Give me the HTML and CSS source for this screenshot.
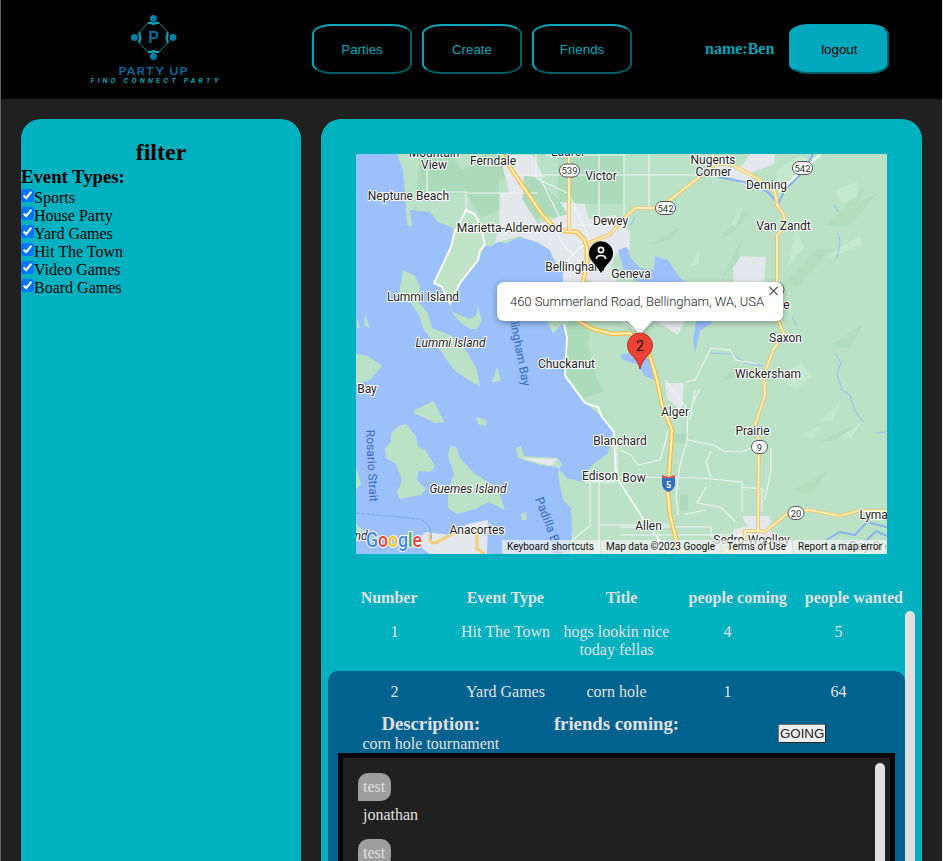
FILE: index.html
```html
<!DOCTYPE html>
<html lang="en">
<head>
<meta charset="utf-8">
<title>Party Up</title>
<link rel="stylesheet" href="styles.css">
</head>
<body>
<header class="topbar">
  <svg class="logo" width="150" height="80" viewBox="80 8 150 80">
    <defs><linearGradient id="ring" x1="0" y1="0" x2="1" y2="1"><stop offset="0" stop-color="#0093b5"/><stop offset="1" stop-color="#00689a"/></linearGradient></defs>
    <g fill="url(#ring)"><circle cx="153.500" cy="18.500" r="3.500"/><circle cx="134.500" cy="37.500" r="3.500"/><circle cx="173" cy="37.500" r="3.500"/><circle cx="153.500" cy="56.500" r="3.500"/></g>
    <g fill="none" stroke="#00a5b8" stroke-width="2.200">
      <path d="M148 23Q151 22.500 153.500 24Q156 22.500 159 23"/>
      <path d="M148 52Q151 52.500 153.500 51Q156 52.500 159 52"/>
      <path d="M139.500 32Q139 35 140.500 37.500Q139 40 139.500 43"/>
      <path d="M167.500 32Q168 35 166.500 37.500Q168 40 167.500 43"/>
    </g>
    <path fill="none" stroke="#00849c" stroke-width="1" d="M148 23L139.500 32M159 23L167.500 32M148 52L139.500 43M159 52L167.500 43"/>
    <text class="logo-letter" x="153.500" y="42.500" text-anchor="middle">P</text>
    <text class="logo-name" x="118.500" y="74.500" textLength="70" lengthAdjust="spacingAndGlyphs">PARTY UP</text>
    <text class="logo-tag" x="90.500" y="83" textLength="128">FIND CONNECT PARTY</text>
  </svg>
  <nav class="nav"><button class="btn">Parties</button><button class="btn">Create</button><button class="btn">Friends</button></nav>
  <div class="user"><b>name:Ben</b><button class="btn solid">logout</button></div>
</header>
<main class="page">
  <aside class="filter">
    <h2>filter</h2>
    <h3>Event Types:</h3>
    <label><input type="checkbox" checked>Sports</label>
    <label><input type="checkbox" checked>House Party</label>
    <label><input type="checkbox" checked>Yard Games</label>
    <label><input type="checkbox" checked>Hit The Town</label>
    <label><input type="checkbox" checked>Video Games</label>
    <label><input type="checkbox" checked>Board Games</label>
  </aside>
  <section class="panel">
    <svg class="map" width="531" height="400" viewBox="356 154 531 400">
      <defs>
        <filter id="shadow" x="-10%" y="-30%" width="120%" height="180%"><feDropShadow dx="0" dy="2" stdDeviation="3" flood-opacity=".35"/></filter>
        <path id="land" d="M397 154L403 170L405 193L406 207L407 225L410 227L412 225L410 210L430 212L438 222L453 228L453 240L445 262L433 283L442 288L450 304L460 283L478 262L485 245L490 247L498 242L507 243L520 237L537 242L550 250L555 263L563 270L563 282L560 300L548 323L553 333L563 323L567 337L568 352L561 361L565 370L567 380L585 403L602 417L613 432L608 453L590 467L583 482L567 478L557 467L540 465L518 458L516 448L521 446L524 456L557 458L562 464L558 472L560 485L563 500L571 508L572 530L570 554H887V154Z"/>
        <clipPath id="shore"><use href="#land"/></clipPath>
      </defs>
      <rect x="356" y="154" width="531" height="400" fill="#9cc0fa"/>
      <use href="#land" fill="#bbe2c6"/>
      <g fill="#bbe2c6">
        <path d="M403 270L415 276L420 287L418 302L428 313L432 328L452 336L467 352L477 370L480 387L467 379L454 370L440 350L424 330L419 315L411 303L398 301Z"/>
        <path d="M451 311L462 316L469 319L476 316L478 306L482 320L477 329L470 329L460 322Z"/>
        <path d="M356 354L368 356L382 366L370 380L356 384Z"/>
        <path d="M414 410L434 401L440 414L444 422L435 423L425 418L415 414Z"/>
        <path d="M399 426L406 424L416 436L418 447L425 450L435 466L431 472L418 471L417 480L426 489L421 495L400 499L397 493L402 480L396 464L386 458L385 448L391 442L391 433Z"/>
        <path d="M450 446L456 447L460 458L475 474L498 488L505 510L489 502L475 509L457 514L448 508L448 490L454 474L448 456Z"/>
        <path d="M476 417L487 420L486 426L478 424ZM492 382L497 367L501 381ZM521 514L526 512L527 520L522 520ZM442 290Q450 299 449 290ZM356 468L361 484L356 490ZM356 524L365 531L356 535ZM357 320L360 328H357ZM365 314L370 328L364 326Z"/>
      </g>
      <g clip-path="url(#shore)">
        <g fill="#a3d7b3" opacity=".65"><path d="M420 154H450L463 170L485 154H511L522 177L540 220H515L515 208L540 205L515 174L536 155H625V204H558V154H530L538 180L582 223L552 217L523 213L525 225L512 209L511 177L498 181L500 210L481 218L467 194L416 193Z"/><path d="M560 324L580 321L590 332L588 345L594 370L603 392L584 398L566 374ZM675 434H686V443H675ZM680 495H688V511H680Z"/></g>
        <g fill="#e4e7eb"><path d="M500 155H533L544 178L524 176L522 204L510 197ZM500 193L519 194L538 224L567 214L560 202L585 204L589 219L615 215L630 232V250L616 254L611 266L619 290L588 280L560 285L557 261L535 244L520 236L495 243L499 225ZM703 165L727 175L751 189L758 184L750 173L774 164L775 154H750L742 166L730 165ZM733 268L741 256L766 257L764 282L774 303L760 318L734 305ZM665 383H684L682 412L667 398ZM742 516H770L771 532L795 546L790 554H733V530L747 526ZM650 317L685 320L678 335Z"/></g>
        <path fill="#9cc0fa" d="M618 250L627 247L630 257L640 268L654 270L655 256L668 260L680 278L698 290L712 323L700 331L695 353L693 340L696 322L670 300L640 283L625 274ZM620 355L636 352L650 359L654 380L645 376L637 364L623 360Z"/>
        <g fill="#aedabb" opacity=".65"><path d="M721 238L743 212L748 214L735 231ZM785 282L818 248L830 250L798 287ZM826 225L867 184L858 202L878 193L848 227ZM650 245L682 226L672 239ZM817 442L858 424L836 440ZM794 490L828 471L811 494ZM831 344L862 325L850 349ZM719 384L739 362L733 378ZM722 279L741 240L738 261Z"/></g>
        <g fill="#c7ead0" opacity=".85"><path d="M776 171L801 155L812 162L778 188ZM836 190L858 182L857 198L841 203ZM838 249L859 236L863 244L827 259ZM796 229L804 247L787 268ZM781 378L801 362L812 376L795 390ZM800 436L822 425L813 438ZM730 225L743 205L736 227ZM690 267L700 247L699 263ZM820 421L841 402L832 421ZM840 437L863 421L851 438Z"/></g>
        <g fill="none" stroke="#87b1ef" stroke-width="2"><path d="M813 154L804 171L785 190L778 204L768 192L744 182L718 177M826 540L840 532L855 535L867 522L887 527M830 550L846 541L863 544L876 531L887 536"/></g>
        <g fill="none" stroke="#94bdf5" stroke-width="1"><path d="M834 205L838 212M838 233L840 241L837 258M792 317L797 326M835 353L841 363L837 374L842 390L850 395L855 411L863 422M877 433L887 432M763 366L745 363L733 354L710 353M635 217L631 225"/></g>
        <g fill="none" stroke="#f0f6f2" stroke-width="1.100"><path d="M536 154V178L569 194L594 248M507 175H700M649 154V207M427 170V193M427 192H466V212M466 193H538M500 225H620M545 155H625M599 154V225M624 154V220M540 178L560 218M542 213L567 249L580 262M567 260L590 239M560 270L582 245M620 477L700 478L742 482V512M742 487L762 489V512M688 440L713 445L724 451L742 452L751 448L760 449M711 451L706 462L711 478M620 450L631 455L638 465L660 460L666 440L668 430M665 380L688 410L687 440L680 465L676 495L678 515M685 514L706 510M695 390L690 420M706 487L697 503L720 507L735 521M620 527H711V537M620 535H745M590 482V526L572 540M599 481V554M600 477H640M585 482H615M612 430L617 445V475M600 525H670M771 448V470L765 500M700 389L693 402M711 348L695 380L685 382M711 348L730 350L736 360L757 364M621 320L640 334"/><path stroke-width="2" d="M618 480L644 520L670 554"/></g>
        <g fill="none" stroke="#f7ba47" stroke-width="4.600"><path id="interstate" d="M501 154L542 214L552 225L563 231L577 232L584 239L587 248V263L583 282M578 321L593 329L613 334L630 333L649 353L657 380L662 405L672 430L669 475L668 494L670 515L680 554"/></g>
        <use href="#interstate" class="roadfill"/>
        <g fill="none" stroke="#edc36b" stroke-width="3.600"><path id="highways" d="M569 154V230M588 243L611 234L621 221L635 208H660L703 174L713 168V154M713 164H730L757 178L775 192L777 205L784 215L784 228L777 235V286L778 320L784 334L773 350L764 375L765 395L755 425L759 440L758 530L765 532L789 512L810 510L825 513L839 516L858 511H887M762 531H745V538L738 546L720 554"/></g>
        <use href="#highways" class="roadfill thin"/>
      </g>
      <path fill="#e4e7eb" d="M430 554L413 542L426 532L450 535L468 524L488 520L487 554Z"/>
      <path fill="none" stroke="#f4cf79" stroke-width="3" d="M430 534Q429 544 435 543L455 533L477 530V549L485 554"/>
      <path d="M466 210L454 234L451 247L434 283L442 287L450 304L460 283L478 260L480 250L485 245L482 233L478 220L474 214Z" fill="#c1e3c8" stroke="#fff" stroke-width="1.800"/>
      <path fill="none" stroke="#fff" stroke-width="1.800" d="M564 324L567 337L565 376L585 403L598 407L602 417L614 432L616 480M779 192L800 172L821 154"/>
      <path fill="#e8e8e8" d="M521 458L558 459L551 466Z"/>
      <path fill="none" stroke="#76a3ee" stroke-dasharray="4 1" d="M356 513L420 519Q433 525 431 540"/>
      <g class="badge"><rect x="559.500" y="164" width="20" height="13" rx="6.500"/><text x="569.500" y="174">539</text><rect x="792.500" y="161.500" width="20" height="13" rx="6.500"/><text x="802.500" y="171.500">542</text><rect x="655.500" y="201.500" width="20" height="13" rx="6.500"/><text x="665.500" y="211.500">542</text><rect x="764" y="283" width="20" height="13" rx="6.500"/><rect x="751.500" y="440.500" width="16" height="13" rx="6.500"/><text x="759.500" y="450.500">9</text><rect x="788" y="506.500" width="16" height="13" rx="6.500"/><text x="796" y="516.500">20</text></g>
      <path fill="#346fc1" d="M662 478H675V484Q675 489 668.500 492Q662 489 662 484Z"/><path fill="#d75252" d="M662 475L668.500 477L675 475V478H662Z"/><text class="shield" x="668.500" y="487.500">5</text>
      <g class="place">
        <text x="434" y="157">Mountain</text><text x="434" y="169">View</text><text x="493" y="165">Ferndale</text><text x="567.500" y="156">Laurel</text><text x="601" y="180">Victor</text><text x="713" y="163.500">Nugents</text><text x="713.500" y="175.500">Corner</text><text x="766.500" y="188.500">Deming</text><text x="408.500" y="199.500">Neptune Beach</text><text x="509.500" y="231.500">Marietta-Alderwood</text><text x="610.500" y="224.500">Dewey</text><text x="783.500" y="229.500">Van Zandt</text><text x="575" y="270.500">Bellingham</text><text x="631" y="277.500">Geneva</text><text x="423" y="300.500">Lummi Island</text><text class="isle" x="450.500" y="346.500">Lummi Island</text><text x="785.500" y="341.500">Saxon</text><text x="566.500" y="367.500">Chuckanut</text><text x="768" y="377.500">Wickersham</text><text x="367" y="392.500">Bay</text><text x="675" y="415.500">Alger</text><text x="752.500" y="434.500">Prairie</text><text x="620" y="444.500">Blanchard</text><text x="600" y="479.500">Edison</text><text x="634" y="481.500">Bow</text><text class="isle" x="468" y="492.500">Guemes Island</text><text x="477" y="533.500">Anacortes</text><text x="648.500" y="529.500">Allen</text><text x="751.500" y="543.500">Sedro-Woolley</text><text x="877" y="518.500">Lyman</text><text class="isle" x="361" y="539.500">nd</text><text x="786.500" y="308.500">e</text><text x="876" y="549.500">Day Creek</text>
      </g>
      <g class="water"><text transform="translate(366 430) rotate(87)" textLength="72">Rosario Strait</text><text transform="translate(507 306) rotate(79)" textLength="82">Bellingham Bay</text><text transform="translate(535 499) rotate(69)" textLength="60">Padilla Bay</text></g>
      <text class="brand" x="366" y="547" textLength="56" lengthAdjust="spacingAndGlyphs"><tspan fill="#4285f4">G</tspan><tspan fill="#ea4335">o</tspan><tspan fill="#fbbc05">o</tspan><tspan fill="#4285f4">g</tspan><tspan fill="#34a853">l</tspan><tspan fill="#ea4335">e</tspan></text>
      <path fill="#f3f5f4" opacity=".7" d="M502 540H887V554H502Z"/><path stroke="#d7dedb" d="M600.500 540V554M721.500 540V554M792.500 540V554"/>
      <g class="legal"><text x="507" y="550" textLength="87">Keyboard shortcuts</text><text x="606" y="550" textLength="109">Map data ©2023 Google</text><text x="727" y="550" textLength="59">Terms of Use</text><text x="798" y="550" textLength="84">Report a map error</text></g>
      <path d="M601 273Q598 268 591 260A12 12 0 1 1 611 260Q604 268 601 273Z"/>
      <g fill="none" stroke="#fff" stroke-width="1.700"><circle cx="601" cy="250" r="2.600"/><path d="M596.500 259V258Q597 255.500 601 255.500T605.500 258V259"/></g>
      <g filter="url(#shadow)"><path fill="#fff" d="M505 282H775Q783 282 783 290V313Q783 321 775 321H652L640 334L628 321H505Q497 321 497 313V290Q497 282 505 282Z"/></g>
      <text class="address" x="510" y="306" textLength="254">460 Summerland Road, Bellingham, WA, USA</text>
      <path d="M769.500 287L777.500 295M777.500 287L769.500 295" stroke="#555" stroke-width="1.200"/>
      <path d="M640 369Q639 362 630 353A12.500 12.500 0 1 1 650 353Q641 362 640 369Z" fill="#ea4335" stroke="#bd3029"/>
      <text class="pin" x="640" y="351">2</text>
    </svg>
    <div class="columns"><b>Number</b><b>Event Type</b><b>Title</b><b>people coming</b><b>people wanted</b></div>
    <div class="list">
      <div class="events">
        <article class="event"><div class="cells"><span>1</span><span>Hit The Town</span><span>hogs lookin nice today fellas</span><span>4</span><span>5</span></div></article>
        <article class="event open">
          <div class="cells"><span>2</span><span>Yard Games</span><span>corn hole</span><span>1</span><span>64</span></div>
          <div class="details"><div><h3>Description:</h3><p>corn hole tournament</p></div><div><h3>friends coming:</h3></div><div><button class="going">GOING</button></div></div>
          <div class="chat"><div class="messages"><div class="message"><span>test</span><p>jonathan</p></div><div class="message"><span>test</span><p>jonathan</p></div></div><div class="scroll"></div></div>
        </article>
      </div>
      <div class="scroll"></div>
    </div>
  </section>
</main>
</body>
</html>
```
FILE: styles.css
```css
* { box-sizing: border-box; margin: 0; padding: 0; }
body { height: 861px; overflow: hidden; background: #202020; border-left: 1px solid #666; border-right: 1px solid #eee; font: 16px/18px "Liberation Serif", serif; }
.topbar { height: 99px; background: #000; display: flex; align-items: center; padding-left: 79px; }
.logo { margin-top: -3px; }
.logo-letter { font: bold 16px "Liberation Sans", sans-serif; fill: #006b98; }
.logo-name { font: 600 10.500px Inter, sans-serif; letter-spacing: .8px; fill: #006999; }
.logo-tag { font: italic bold 6.500px Inter, sans-serif; fill: #00a3b5; }
.nav { display: flex; gap: 10px; margin: -1px 0 0 82px; }
.btn { width: 100px; height: 50px; border: 2px outset #00a8bd; border-radius: 20%; background: #000; color: #00a8bd; font: 13.333px "Liberation Sans", sans-serif; }
.solid { background: #00a8bd; color: #000; }
.user { display: flex; align-items: center; gap: 15px; color: #00a3b5; margin: -1px 0 0 73px; }
.page { display: flex; gap: 20px; padding: 20px 20px 0; height: 762px; }
.filter, .panel { background: #00b2bf; border-radius: 20px 20px 0 0; }
.filter { width: 280px; padding-top: 20px; }
.filter h2 { font-size: 24px; line-height: 27px; text-align: center; }
h3 { font-size: 18.720px; line-height: 22px; }
.filter label { display: flex; height: 18px; line-height: 19px; }
.filter input { width: 13px; height: 13px; margin-top: 1px; accent-color: #0075ff; }
.panel { width: 601px; color: #e0e0e0; overflow: hidden; }
.map { display: block; margin: 35px 35px 0; font-family: Roboto, sans-serif; }
.roadfill { fill: none; stroke: #fff0b7; stroke-width: 2.200px; }
#interstate, #highways { stroke-width: inherit; }
.thin { stroke-width: 1.800px; }
.place text, .water text { font-size: 12px; paint-order: stroke; }
.place text { text-anchor: middle; fill: #222; stroke: #fff; stroke-width: 2px; }
.place .isle { font-style: italic; }
.water text { fill: #3969bd; }
.badge { fill: #fff; stroke: #555; }
.badge text { fill: #333; stroke: none; text-anchor: middle; font-size: 9.500px; }
.shield { font-size: 9px; font-weight: bold; fill: #fff; text-anchor: middle; }
.legal { font-size: 10px; fill: #111; }
.brand { font: 500 20px Roboto, sans-serif; paint-order: stroke; stroke: #fff; stroke-width: 2px; }
.address { font-size: 13px; font-weight: 300; fill: #222; }
.pin { font-size: 14px; text-anchor: middle; fill: #111; }
.columns { margin: 35px 10px 4px; display: grid; grid-template-columns: repeat(5, 1fr); text-align: center; }
.list { display: flex; height: 270px; margin: 0 7px; }
.events { flex: 1; }
.scroll { width: 10px; border-radius: 5px 5px 0 0; background: #e0e0e0; }
.event { padding: 12px 10px; }
.open { height: 210px; background: #00628e; border-radius: 10px 10px 0 0; }
.cells { display: grid; grid-template-columns: repeat(5, 111px); justify-content: center; text-align: center; }
.details { display: grid; grid-template-columns: repeat(3, 1fr); text-align: center; height: 40px; margin: 12px 0 0; }
.going { height: 19px; width: 48px; margin-top: 11px; border: 1px outset #777; border-radius: 2px; background: #efefef; color: #222; font: 13.333px "Liberation Sans", sans-serif; }
.chat { height: 180px; border: 5px solid #000; background: #202020; display: flex; padding: 5px 5px 0; }
.messages { flex: 1; padding: 10px; }
.message { height: 66px; }
.message span { display: inline-block; padding: 5px; width: 33px; background: #9e9e9e; border-radius: 10px 10px 10px 0; }
.message p { padding: 5px; }
```
